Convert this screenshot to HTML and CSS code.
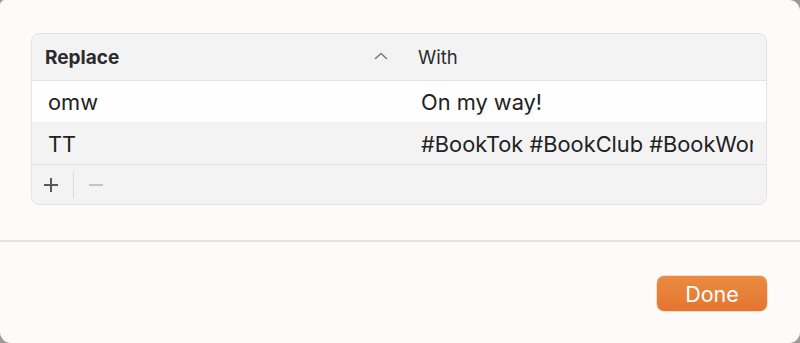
FILE: index.html
```html
<!DOCTYPE html>
<html lang="en">
<head>
<meta charset="utf-8">
<title>Text Replacements</title>
<link rel="stylesheet" href="styles.css">
</head>
<body>
<div class="window">
  <div class="content">
    <div class="table">
      <div class="row header">
        <div class="cell c1">
          <span class="hd bold">Replace</span>
          <svg class="chev" width="14" height="8" viewBox="0 0 14 8"><polyline points="1.5,6.5 7,1.5 12.5,6.5" fill="none" stroke="#7b7b7b" stroke-width="1.6" stroke-linecap="round" stroke-linejoin="round"/></svg>
        </div>
        <div class="cell c2"><span class="hd">With</span></div>
      </div>
      <div class="row body r1">
        <div class="cell c1"><span class="txt">omw</span></div>
        <div class="cell c2"><span class="txt">On my way!</span></div>
      </div>
      <div class="row body r2">
        <div class="cell c1"><span class="txt">TT</span></div>
        <div class="cell c2"><span class="txt">#BookTok #BookClub #BookWorm</span></div>
      </div>
      <div class="tools">
        <button class="tool add" aria-label="Add">
          <svg width="16" height="16" viewBox="0 0 16 16"><path d="M8 1v14M1 8h14" stroke="#5a5a5a" stroke-width="2" fill="none"/></svg>
        </button>
        <span class="sep"></span>
        <button class="tool remove" aria-label="Remove">
          <svg width="16" height="16" viewBox="0 0 16 16"><path d="M1 8h14" stroke="#c4c4c4" stroke-width="2" fill="none"/></svg>
        </button>
      </div>
    </div>
  </div>
  <div class="divider"></div>
  <div class="actions">
    <button class="done">Done</button>
  </div>
</div>
</body>
</html>
```
FILE: styles.css
```css
html, body {
  margin: 0;
  padding: 0;
  background: #9b9b9b;
}
body {
  width: 800px;
  height: 343px;
  overflow: hidden;
  font-family: Inter, "Liberation Sans", sans-serif;
  color: #262626;
}
.window {
  width: 800px;
  height: 343px;
  background: #fcfbf9;
  border-radius: 5px 11px 11px 11px;
  display: flex;
  flex-direction: column;
  overflow: hidden;
}
.content {
  padding: 33px 33px 0 31px;
}
.table {
  width: 734px;
  border: 1px solid #e3e3e3;
  border-radius: 8px;
  background: #f3f3f4;
  overflow: hidden;
}
.row {
  display: grid;
  grid-template-columns: 373px 1fr;
}
.header {
  height: 46px;
  border-bottom: 1px solid #e2e2e2;
}
.header .cell {
  display: flex;
  align-items: center;
  padding-left: 13px;
  font-size: 18.5px;
  color: #2b2b2b;
}
.header .c1 {
  justify-content: space-between;
  padding-right: 17px;
}
.hd.bold {
  font-weight: 700;
  font-size: 19px;
}
.chev {
  margin-top: -2px;
}
.body .cell {
  display: flex;
  align-items: center;
  padding-left: 16px;
  padding-right: 13px;
  font-size: 21.8px;
  padding-top: 1px;
  color: #222222;
  min-width: 0;
}
.txt {
  display: block;
  white-space: nowrap;
  overflow: hidden;
  min-width: 0;
}
.r1 {
  height: 41px;
  background: #fefefe;
}
.r2 {
  height: 42px;
  background: #f3f3f4;
  border-bottom: 1px solid #e2e2e2;
}
.tools {
  height: 39px;
  display: flex;
  align-items: center;
  padding-left: 11px;
}
.tool {
  border: 0;
  background: none;
  padding: 0;
  width: 16px;
  height: 16px;
  display: flex;
  margin-top: 1px;
}
.sep {
  width: 1px;
  height: 26px;
  background: #dadada;
  margin: 0 14px 0 14px;
}
.divider {
  margin-top: 35px;
  height: 2px;
  background: #e4e4e4;
}
.actions {
  display: flex;
  justify-content: flex-end;
  padding: 34px 33px 0 0;
}
.done {
  width: 110px;
  height: 35px;
  border: 0;
  border-radius: 7px;
  background: linear-gradient(#ea8b41, #e4752f);
  color: #ffffff;
  font-family: Inter, "Liberation Sans", sans-serif;
  font-size: 21.5px;
  padding: 0;
  box-shadow: 0 0 0 0.5px rgba(200, 100, 30, 0.4);
}
```
